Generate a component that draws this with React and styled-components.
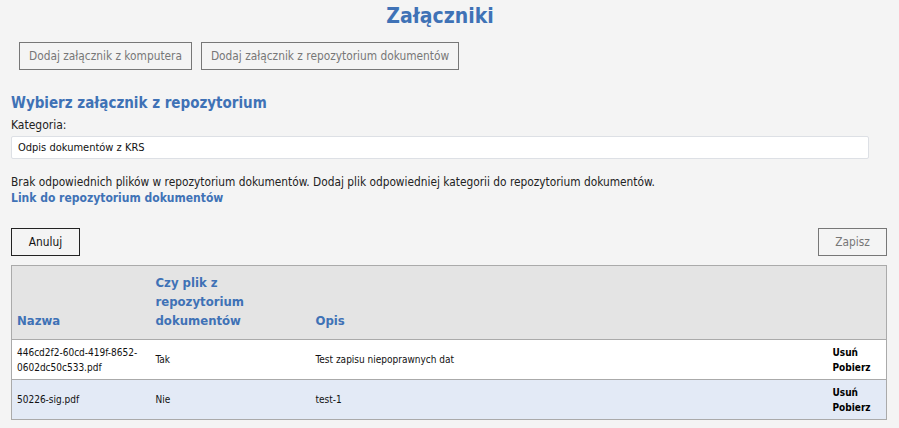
import React from 'react';
import styled, { createGlobalStyle } from 'styled-components';

const GlobalStyle = createGlobalStyle`
  body {
    margin: 0;
    background: #f4f4f4;
    font-family: "DejaVu Sans Condensed", "Liberation Sans", sans-serif;
    color: #222;
  }
`;

const blue = '#3f72b6';

const rows = [
  { name: '446cd2f2-60cd-419f-8652-0602dc50c533.pdf', repo: 'Tak', desc: 'Test zapisu niepoprawnych dat' },
  { name: '50226-sig.pdf', repo: 'Nie', desc: 'test-1' },
];

export default function App() {
  return (
    <Page>
      <GlobalStyle />
      <Title>Załączniki</Title>
      <SourceBar>
        <OutlineButton>Dodaj załącznik z komputera</OutlineButton>
        <OutlineButton>Dodaj załącznik z repozytorium dokumentów</OutlineButton>
      </SourceBar>

      <SectionTitle>Wybierz załącznik z repozytorium</SectionTitle>
      <Label>Kategoria:</Label>
      <Select>Odpis dokumentów z KRS</Select>

      <Info>
        Brak odpowiednich plików w repozytorium dokumentów. Dodaj plik odpowiedniej kategorii do repozytorium dokumentów.
      </Info>
      <RepoLink href="#">Link do repozytorium dokumentów</RepoLink>

      <Actions>
        <OutlineButton $dark>Anuluj</OutlineButton>
        <OutlineButton>Zapisz</OutlineButton>
      </Actions>

      <Table>
        <thead>
          <tr>
            <Th $w={139}>Nazwa</Th>
            <Th $w={160}>Czy plik z repozytorium dokumentów</Th>
            <Th>Opis</Th>
            <Th $w={59} />
          </tr>
        </thead>
        <tbody>
          {rows.map((r, i) => (
            <Row key={r.name} $alt={i % 2 === 1}>
              <Td>{r.name}</Td>
              <Td>{r.repo}</Td>
              <Td>{r.desc}</Td>
              <Td>
                <ActionLink>Usuń</ActionLink>
                <ActionLink>Pobierz</ActionLink>
              </Td>
            </Row>
          ))}
        </tbody>
      </Table>
    </Page>
  );
}

const Page = styled.div`
  width: 899px;
  box-sizing: border-box;
  padding: 3px 12px 8px 11px;
`;

const Title = styled.h1`
  margin: 0;
  padding-right: 18px;
  text-align: center;
  font-size: 21px;
  line-height: 26px;
  font-weight: bold;
  color: ${blue};
`;

const SourceBar = styled.div`
  display: flex;
  gap: 9px;
  margin: 13px 0 0 8px;
`;

const OutlineButton = styled.button`
  height: 28px;
  padding: 0 9px;
  min-width: 69px;
  background: #f4f4f4;
  border: 1px solid ${(p) => (p.$dark ? '#222' : '#777')};
  color: ${(p) => (p.$dark ? '#111' : '#777')};
  font-family: inherit;
  font-size: 11.8px;
  cursor: pointer;
`;

const SectionTitle = styled.h2`
  margin: 23px 0 0;
  font-size: 15px;
  line-height: 20px;
  font-weight: bold;
  color: ${blue};
`;

const Label = styled.div`
  margin-top: 5px;
  font-size: 12px;
  line-height: 15px;
`;

const Select = styled.div`
  margin-top: 3px;
  height: 23px;
  width: 858px;
  box-sizing: border-box;
  background: #fff;
  border: 1px solid #dde0e5;
  border-radius: 2px;
  padding: 0 6px;
  display: flex;
  align-items: center;
  font-size: 11px;
  color: #111;
`;

const Info = styled.p`
  margin: 15px 0 0;
  font-size: 11.8px;
  line-height: 16px;
`;

const RepoLink = styled.a`
  display: block;
  font-size: 12px;
  line-height: 16px;
  font-weight: bold;
  color: ${blue};
  text-decoration: none;
`;

const Actions = styled.div`
  display: flex;
  justify-content: space-between;
  margin-top: 22px;
`;

const Table = styled.table`
  margin-top: 9px;
  width: 876px;
  border-collapse: collapse;
  border: 1px solid #aaa;
  font-size: 10px;
`;

const Th = styled.th`
  width: ${(p) => (p.$w ? `${p.$w}px` : 'auto')};
  height: 74px;
  box-sizing: border-box;
  background: #e4e4e4;
  border-bottom: 1px solid #aaa;
  padding: 6px 6px 9px 5px;
  text-align: left;
  vertical-align: bottom;
  color: ${blue};
  font-size: 13px;
  line-height: 19px;
  font-weight: bold;
`;

const Row = styled.tr`
  background: ${(p) => (p.$alt ? '#e3eaf6' : '#fff')};
  border-bottom: 1px solid #aaa;
`;

const Td = styled.td`
  height: 40px;
  box-sizing: border-box;
  padding: 4px 6px 4px 5px;
  line-height: 15px;
  vertical-align: middle;
  color: #111;
`;

const ActionLink = styled.div`
  font-weight: bold;
  color: #000;
  cursor: pointer;
`;
